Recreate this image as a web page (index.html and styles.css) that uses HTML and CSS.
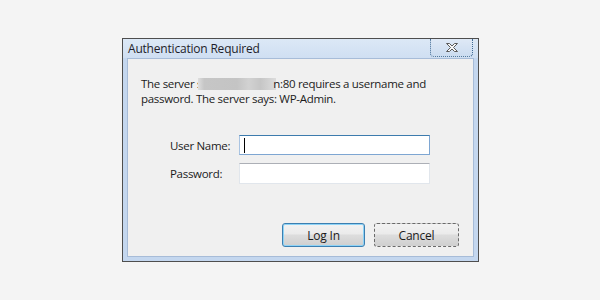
FILE: index.html
```html
<!DOCTYPE html>
<html lang="en">
<head>
    <meta charset="UTF-8">
    <title>Authentication Required</title>
    <link rel="stylesheet" href="styles.css">
</head>
<body>
    <div class="window">
        <div class="titlebar">
            <span class="title">Authentication Required</span>
            <button class="close" aria-label="Close">
                <svg width="16" height="11" viewBox="0 0 16 11">
                    <path d="M2.5 1.5h3l2.5 2.5 2.5-2.5h3l-4 4 4 4h-3l-2.5-2.5-2.5 2.5h-3l4-4z" fill="#f7f7f7" stroke="#5a5a5a" stroke-width="1"/>
                </svg>
            </button>
        </div>
        <div class="client">
            <p class="message">
                <span class="line">The server s<span class="masked"></span>n:80 requires a username and</span>
                <span class="line">password. The server says: WP-Admin.</span>
            </p>

            <div class="fields">
                <label class="row">
                    <span class="label">User Name:</span>
                    <span class="input focused"><span class="caret"></span></span>
                </label>
                <label class="row">
                    <span class="label">Password:</span>
                    <span class="input"></span>
                </label>
            </div>

            <div class="actions">
                <button class="button default">Log In</button>
                <button class="button dotted">Cancel</button>
            </div>
        </div>
    </div>
</body>
</html>
```

FILE: styles.css
```css
body {
    margin: 0;
    background: #f4f4f4;
    font-family: "Open Sans", "Noto Sans", sans-serif;
    font-size: 11.5px;
    letter-spacing: -0.3px;
    color: #1b1b1b;
}

.window {
    box-sizing: border-box;
    width: 357px;
    height: 224px;
    margin: 38px 0 0 122px;
    border: 1px solid #4e4e4e;
    background: #c4d7ef;
    padding: 0 4px 4px 4px;
    display: flex;
    flex-direction: column;
}

.titlebar {
    height: 19px;
    display: flex;
    align-items: flex-start;
    justify-content: space-between;
    background: linear-gradient(#dce8f6, #cfdff2);
    margin: 0 -4px;
    padding: 0 5px 0 5px;
}

.title {
    margin-top: 1px;
    font-size: 12px;
    letter-spacing: -0.2px;
    color: #1e1e2a;
}

.close {
    box-sizing: border-box;
    width: 43px;
    height: 18px;
    margin: 0;
    padding: 0;
    border: 1px dotted #3f6a93;
    border-top: none;
    border-radius: 0 0 4px 4px;
    background: linear-gradient(#dfe9f6, #cbdcf0);
    display: flex;
    align-items: center;
    justify-content: center;
}

.client {
    flex: 1;
    border: 1px solid #a7bcd8;
    background: #f0f0f0;
    display: flex;
    flex-direction: column;
    padding: 0 14px 9px 13px;
}

.message {
    margin: 17px 0 0 0;
    display: flex;
    flex-direction: column;
}

.line {
    height: 15px;
    line-height: 15px;
    white-space: nowrap;
}

.masked {
    display: inline-block;
    width: 78px;
    height: 12px;
    margin: 0 -3px 0 -4px;
    vertical-align: -2px;
    background: linear-gradient(90deg, #dedede 0, #c6c6c6 8%, #c4c4c4 50%, #d2d2d2 65%, #c6c6c6 80%, #dcdcdc 100%);
}

.fields {
    margin-top: 29px;
    display: flex;
    flex-direction: column;
    gap: 8px;
}

.row {
    display: flex;
    align-items: center;
    padding-left: 29px;
}

.label {
    width: 69px;
}

.input {
    box-sizing: border-box;
    width: 191px;
    height: 21px;
    background: #fff;
    border: 1px solid #e1e6ec;
    border-top-color: #acafb6;
    display: flex;
    align-items: center;
    padding-left: 4px;
}

.input.focused {
    height: 20px;
    border-color: #7ea6d2;
    border-top-color: #3d7bad;
    border-left-color: #a9c4e2;
}

.caret {
    width: 1px;
    height: 15px;
    background: #000;
}

.actions {
    margin-top: auto;
    display: flex;
    justify-content: flex-end;
    gap: 9px;
}

.button {
    box-sizing: border-box;
    width: 83px;
    height: 24px;
    padding: 0;
    border: 1px solid #707070;
    border-radius: 3px;
    background: linear-gradient(#f2f2f2 0, #ebebeb 45%, #dddddd 50%, #cfcfcf 100%);
    font-family: inherit;
    font-size: 12px;
    color: #1b1b1b;
    letter-spacing: -0.2px;
}

.button.default {
    border-color: #3c7fb1;
    box-shadow: inset 0 0 0 1px #8ed3f6;
}

.button.dotted {
    width: 85px;
    border-style: dashed;
    border-color: #6a6a6a;
}
```
